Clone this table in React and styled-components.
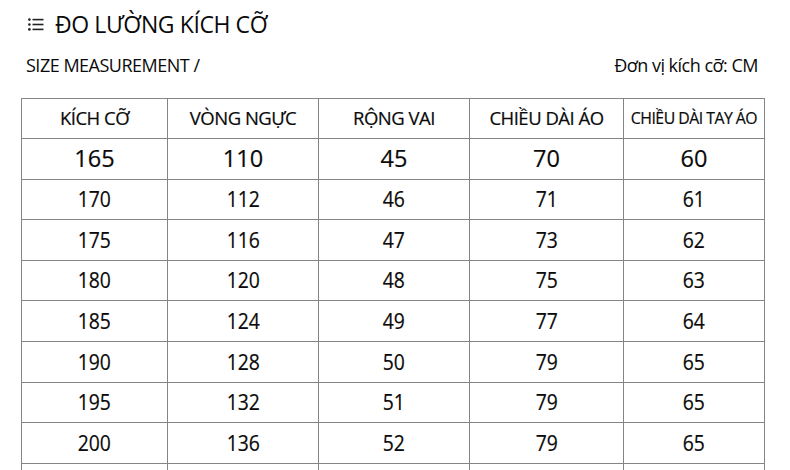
import React from "react";
import styled, { createGlobalStyle } from "styled-components";

const GlobalStyle = createGlobalStyle`
  html, body {
    margin: 0;
    padding: 0;
    background: #fff;
  }
  body {
    font-family: "Open Sans", "Noto Sans", sans-serif;
    color: #0a0a0a;
    overflow: hidden;
  }
`;

const Page = styled.div`
  width: 790px;
  height: 470px;
  overflow: hidden;
  display: flex;
  flex-direction: column;
`;

const Heading = styled.h1`
  display: flex;
  align-items: center;
  gap: 11px;
  margin: 9px 0 0 28px;
  font-size: 23px;
  font-weight: 400;
  letter-spacing: -0.4px;
  line-height: 30px;
`;

const SubRow = styled.div`
  display: flex;
  justify-content: space-between;
  align-items: center;
  margin: 14px 32px 0 26px;
  font-size: 18px;
  line-height: 24px;
  letter-spacing: -0.5px;
`;

const Table = styled.table`
  margin: 21px 0 0 21px;
  width: 743px;
  border-collapse: collapse;
  table-layout: fixed;
`;

const Cell = styled.td`
  border: 1.5px solid #858585;
  height: ${p => (p.$head ? 39 : 39.6)}px;
  padding: 0;
  text-align: center;
  vertical-align: middle;
  font-size: ${p => p.$size || 21}px;
  line-height: 1;
  letter-spacing: ${p => (p.$head ? "-0.5px" : "0")};
  white-space: nowrap;
  -webkit-text-stroke: 0.2px #0a0a0a;
`;

const Num = styled.span`
  display: inline-block;
  transform: scaleX(${p => (p.$big ? 1 : 0.86)});
`;

const ListIcon = () => (
  <svg width="16" height="13" viewBox="0 0 16 13">
    <g fill="#222">
      <circle cx="1.4" cy="1.6" r="1.3" />
      <circle cx="1.4" cy="6.5" r="1.3" />
      <circle cx="1.4" cy="11.4" r="1.3" />
      <rect x="4.5" y="0.8" width="11" height="1.6" />
      <rect x="4.5" y="5.7" width="11" height="1.6" />
      <rect x="4.5" y="10.6" width="11" height="1.6" />
    </g>
  </svg>
);

const headers = [
  { label: "KÍCH CỠ", size: 18.5 },
  { label: "VÒNG NGỰC", size: 18.5 },
  { label: "RỘNG VAI", size: 18.5 },
  { label: "CHIỀU DÀI ÁO", size: 18.5 },
  { label: "CHIỀU DÀI TAY ÁO", size: 15.8 }
];

const widths = [146, 151, 151, 154, 141];

const rows = [
  ["165", "110", "45", "70", "60"],
  ["170", "112", "46", "71", "61"],
  ["175", "116", "47", "73", "62"],
  ["180", "120", "48", "75", "63"],
  ["185", "124", "49", "77", "64"],
  ["190", "128", "50", "79", "65"],
  ["195", "132", "51", "79", "65"],
  ["200", "136", "52", "79", "65"],
  ["", "", "", "", ""]
];

export default function App() {
  return (
    <Page>
      <GlobalStyle />
      <Heading>
        <ListIcon />
        ĐO LƯỜNG KÍCH CỠ
      </Heading>
      <SubRow>
        <span>SIZE MEASUREMENT /</span>
        <span>Đơn vị kích cỡ: CM</span>
      </SubRow>
      <Table>
        <colgroup>
          {widths.map((w, i) => (
            <col key={i} style={{ width: w }} />
          ))}
        </colgroup>
        <thead>
          <tr>
            {headers.map(h => (
              <Cell as="th" key={h.label} $head $size={h.size} style={{ fontWeight: 400 }}>
                {h.label}
              </Cell>
            ))}
          </tr>
        </thead>
        <tbody>
          {rows.map((r, i) => (
            <tr key={i}>
              {r.map((v, j) => (
                <Cell key={j} $size={i === 0 ? 23.5 : 22.5}>
                  <Num $big={i === 0}>{v}</Num>
                </Cell>
              ))}
            </tr>
          ))}
        </tbody>
      </Table>
    </Page>
  );
}
